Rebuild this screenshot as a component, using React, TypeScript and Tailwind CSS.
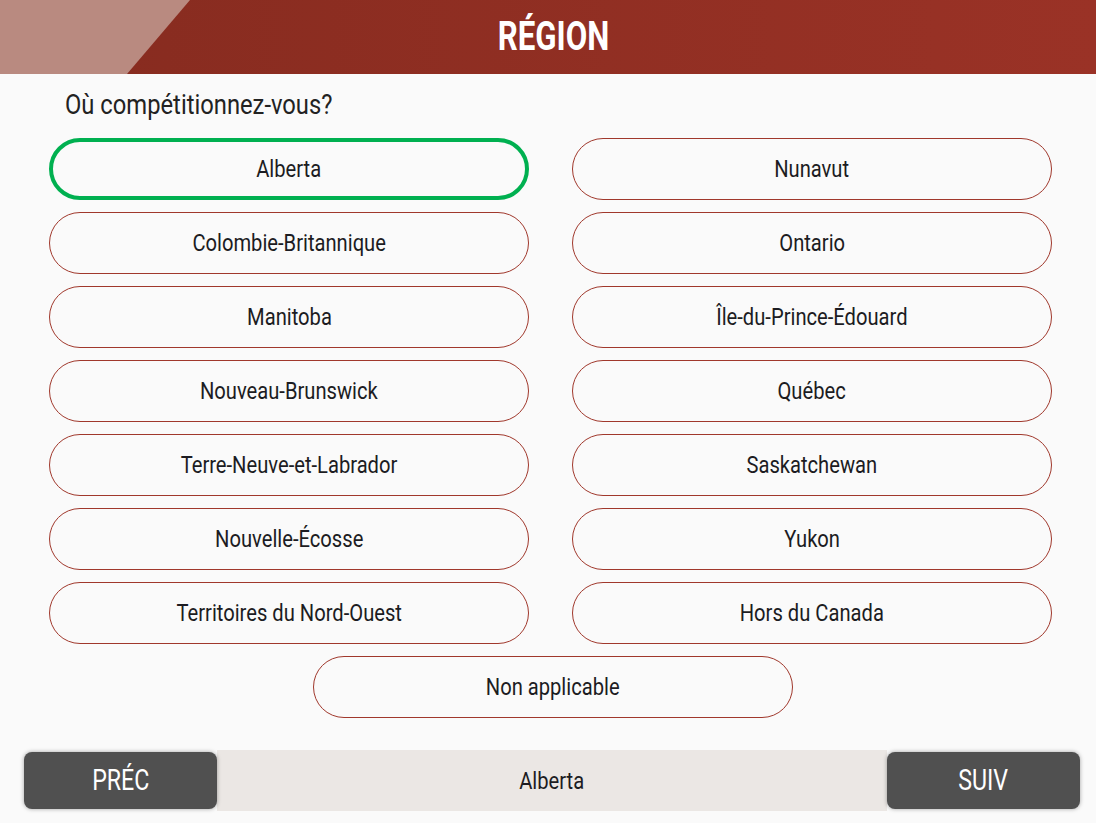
import React, { useState } from "react";

const LEFT = [
  "Alberta",
  "Colombie-Britannique",
  "Manitoba",
  "Nouveau-Brunswick",
  "Terre-Neuve-et-Labrador",
  "Nouvelle-Écosse",
  "Territoires du Nord-Ouest",
];

const RIGHT = [
  "Nunavut",
  "Ontario",
  "Île-du-Prince-Édouard",
  "Québec",
  "Saskatchewan",
  "Yukon",
  "Hors du Canada",
];

const FONT = { fontFamily: 'Roboto, "Liberation Sans", sans-serif' };

// texte étroit (police condensée simulée)
const Narrow: React.FC<{ children: React.ReactNode; className?: string }> = ({ children, className }) => (
  <span className={`inline-block whitespace-nowrap ${className ?? "scale-x-[0.84]"}`}>{children}</span>
);

const RegionButton: React.FC<{ label: string; selected: boolean; onClick: () => void }> = ({
  label,
  selected,
  onClick,
}) => (
  <button
    type="button"
    onClick={onClick}
    className={`h-[62px] w-[480px] rounded-full bg-[#fafafa] text-[24px] text-[#1c1c22] flex items-center justify-center ${
      selected ? "border-[4px] border-[#00b050]" : "border-[1.5px] border-[#a0382c]"
    }`}
  >
    <Narrow>{label}</Narrow>
  </button>
);

export default function App() {
  const [selected, setSelected] = useState("Alberta");

  return (
    <div className="w-[1096px] h-[823px] bg-[#fafafa] flex flex-col overflow-hidden" style={FONT}>
      {/* En-tête */}
      <div className="relative h-[74px] bg-gradient-to-r from-[#862b1f] to-[#9a3226] flex items-center justify-center">
        <div
          className="absolute left-0 top-0 h-full w-[190px] bg-[#b98a80]"
          style={{ clipPath: "polygon(0 0, 100% 0, 127px 100%, 0 100%)" }}
        />
        <h1 className="relative text-white font-bold text-[40px] leading-none pl-[11px]">
          <Narrow className="scale-x-[0.78]">RÉGION</Narrow>
        </h1>
      </div>

      <div className="pl-[65px] pt-[13px] h-[64px] text-[27px] leading-[36px] text-[#222]">
        <Narrow className="origin-left scale-x-[0.88]">Où compétitionnez-vous?</Narrow>
      </div>

      <div className="flex flex-col gap-[12px] pl-[49px]">
        <div className="flex gap-[43px]">
          <div className="flex flex-col gap-[12px]">
            {LEFT.map((r) => (
              <RegionButton key={r} label={r} selected={selected === r} onClick={() => setSelected(r)} />
            ))}
          </div>
          <div className="flex flex-col gap-[12px]">
            {RIGHT.map((r) => (
              <RegionButton key={r} label={r} selected={selected === r} onClick={() => setSelected(r)} />
            ))}
          </div>
        </div>
        <div className="pl-[264px]">
          <RegionButton
            label="Non applicable"
            selected={selected === "Non applicable"}
            onClick={() => setSelected("Non applicable")}
          />
        </div>
      </div>

      {/* Barre de navigation */}
      <div className="mt-[32px] flex items-center pl-[24px] pr-[16px] h-[61px]">
        <button
          type="button"
          className="w-[193px] h-[57px] rounded-[8px] bg-[#505050] text-white text-[29px] shadow-[0_0_4px_rgba(0,0,0,0.35)] z-10"
        >
          <Narrow className="scale-x-[0.80]">PRÉC</Narrow>
        </button>
        <div className="flex-1 h-[61px] bg-[#ebe7e4] flex items-center justify-center text-[24px] text-[#1c1c22]">
          <Narrow>{selected}</Narrow>
        </div>
        <button
          type="button"
          className="w-[193px] h-[57px] rounded-[8px] bg-[#505050] text-white text-[29px] shadow-[0_0_4px_rgba(0,0,0,0.35)] z-10"
        >
          <Narrow className="scale-x-[0.80]">SUIV</Narrow>
        </button>
      </div>
    </div>
  );
}
